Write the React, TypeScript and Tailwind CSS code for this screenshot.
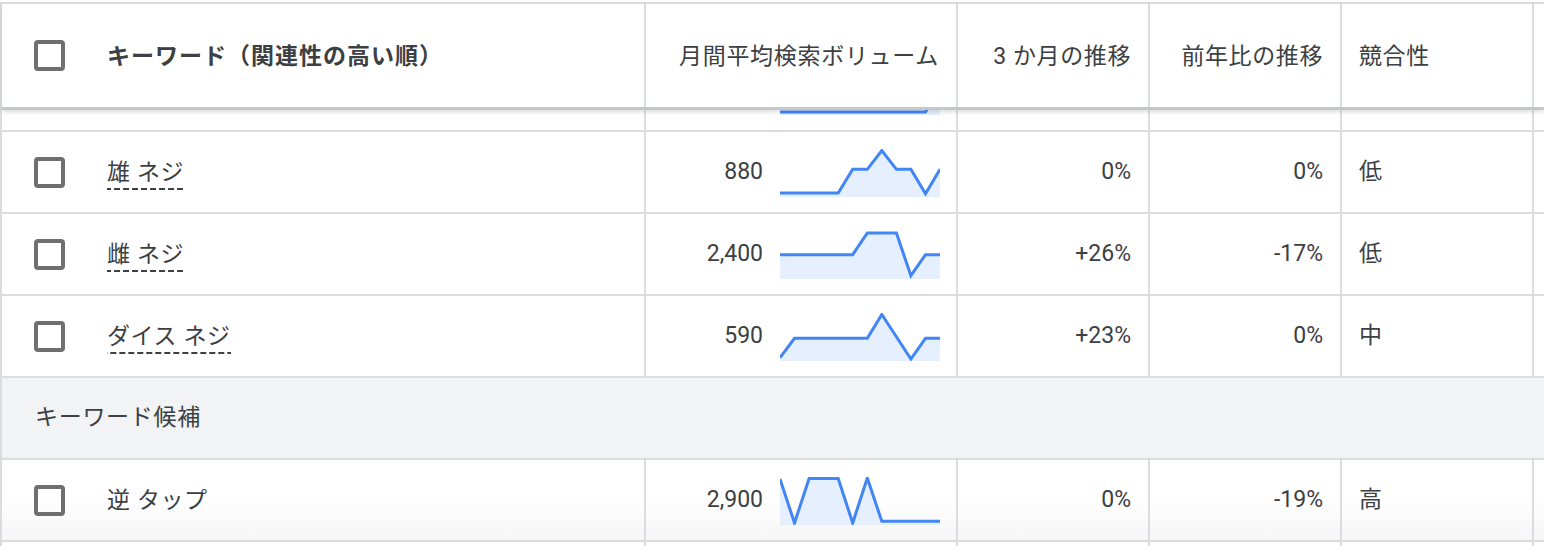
import React from "react";

type Row = {
  keyword: string;
  dashed: boolean;
  volume: string;
  trend: number[];
  threeMonth: string;
  yoy: string;
  competition: string;
};

// ヘッダーの下に隠れている行（グラフの下端だけが見える）
const partialRow: Row = {
  keyword: "",
  dashed: false,
  volume: "",
  trend: [45, 45, 45, 45, 45, 45, 45, 45, 45, 45, 45, 20],
  threeMonth: "",
  yoy: "",
  competition: "",
};

const savedRows: Row[] = [
  {
    keyword: "雄 ネジ",
    dashed: true,
    volume: "880",
    trend: [44, 44, 44, 44, 44, 20.3, 20.3, 1.5, 20.3, 20.3, 44.7, 20.3],
    threeMonth: "0%",
    yoy: "0%",
    competition: "低",
  },
  {
    keyword: "雌 ネジ",
    dashed: true,
    volume: "2,400",
    trend: [23.7, 23.7, 23.7, 23.7, 23.7, 23.7, 2, 2, 2, 44.7, 23.7, 23.7],
    threeMonth: "+26%",
    yoy: "-17%",
    competition: "低",
  },
  {
    keyword: "ダイス ネジ",
    dashed: true,
    volume: "590",
    trend: [44.7, 25.3, 25.3, 25.3, 25.3, 25.3, 25.3, 1.5, 23.7, 46, 25.3, 25.3],
    threeMonth: "+23%",
    yoy: "0%",
    competition: "中",
  },
];

const ideaRows: Row[] = [
  {
    keyword: "逆 タップ",
    dashed: false,
    volume: "2,900",
    trend: [2, 46, 1.5, 1.5, 1.5, 46, 1, 44.3, 44.3, 44.3, 44.3, 44.3],
    threeMonth: "0%",
    yoy: "-19%",
    competition: "高",
  },
];

function Sparkline({ values }: { values: number[] }) {
  const step = 160 / (values.length - 1);
  const pts = values.map((y, i) => `${(i * step).toFixed(1)},${y}`).join(" ");
  return (
    <svg width="160" height="48" viewBox="0 0 160 48" className="block shrink-0">
      <polygon points={`0,48 ${pts} 160,48`} fill="#e6effd" />
      <polyline points={pts} fill="none" stroke="#4285f4" strokeWidth="3" strokeLinejoin="miter" />
    </svg>
  );
}

function Checkbox() {
  return <span className="block w-[31px] h-[31px] shrink-0 rounded-[4px] border-[4px] border-[#6f6f6f]" />;
}

function DataRow({ row, showCheckbox = true, className = "" }: { row: Row; showCheckbox?: boolean; className?: string }) {
  return (
    <div
      className={`grid grid-cols-[644px_312px_192px_192px_192px_1fr] h-[82px] border-b-2 border-[#dadce0] ${className}`}
    >
      <div className="flex items-center pl-[32px] border-r-2 border-[#dadce0]">
        {showCheckbox && <Checkbox />}
        {row.keyword && (
          <span
            className={`ml-[42px] inline-block leading-[30px] tracking-[0.6px] ${
              row.dashed
                ? "pb-[2px] mt-[3px] bg-[linear-gradient(to_right,#3c4043_6px,transparent_6px)] bg-[length:9px_2px] bg-repeat-x bg-bottom"
                : "mt-[1px]"
            }`}
          >
            {row.keyword}
          </span>
        )}
      </div>
      <div className="flex items-center justify-end gap-[17px] pr-[16px] border-r-2 border-[#dadce0]">
        {row.volume && <span className="mt-[1px]">{row.volume}</span>}
        <div className="mt-[2px]">
          <Sparkline values={row.trend} />
        </div>
      </div>
      <div className="flex items-center justify-end pr-[17px] border-r-2 border-[#dadce0]">
        <span className="mt-[1px]">{row.threeMonth}</span>
      </div>
      <div className="flex items-center justify-end pr-[17px] border-r-2 border-[#dadce0]">
        <span className="mt-[1px]">{row.yoy}</span>
      </div>
      <div className="flex items-center pl-[17px] border-r-2 border-[#dadce0]">
        <span className="mt-[1px]">{row.competition}</span>
      </div>
      <div />
    </div>
  );
}

export default function App() {
  return (
    <div className="w-[1544px] h-[546px] overflow-hidden bg-white pt-[2px] text-[23px] text-[#3c4043] font-['Roboto','Noto_Sans_CJK_JP',sans-serif]">
      <div className="border-t-2 border-l-2 border-[#dadce0]">
        {/* ヘッダー */}
        <div className="relative z-10 bg-white grid grid-cols-[644px_312px_192px_192px_192px_1fr] h-[106px] border-b-[3px] border-[#c6c7ca] shadow-[0_2px_4px_rgba(60,64,67,0.18)]">
          <div className="flex items-center pl-[32px] border-r-2 border-[#dadce0]">
            <Checkbox />
            <span className="ml-[42px] mt-[3px] font-bold tracking-[1px]">キーワード（関連性の高い順）</span>
          </div>
          <div className="flex items-center justify-end pr-[17px] border-r-2 border-[#dadce0]">
            <span className="mt-[3px] tracking-[0.7px]">月間平均検索ボリューム</span>
          </div>
          <div className="flex items-center justify-end pr-[17px] border-r-2 border-[#dadce0]">
            <span className="mt-[3px] tracking-[0.6px]">3 か月の推移</span>
          </div>
          <div className="flex items-center justify-end pr-[17px] border-r-2 border-[#dadce0]">
            <span className="mt-[3px] tracking-[0.6px]">前年比の推移</span>
          </div>
          <div className="flex items-center pl-[17px] border-r-2 border-[#dadce0]">
            <span className="mt-[3px] tracking-[0.6px]">競合性</span>
          </div>
          <div />
        </div>

        {/* スクロールで隠れた行 */}
        <div className="h-[22px] overflow-hidden">
          <div className="-mt-[60px]">
            <DataRow row={partialRow} showCheckbox={false} />
          </div>
        </div>

        {savedRows.map((row) => (
          <DataRow key={row.keyword} row={row} />
        ))}

        <div className="h-[82px] flex items-center pl-[33px] bg-[#f1f3f4] border-b-2 border-[#dadce0]">
          <span className="mt-[1px] tracking-[0.7px]">キーワード候補</span>
        </div>

        <DataRow row={ideaRows[0]} className="bg-[linear-gradient(to_bottom,#ffffff_45%,#f6f6f6)]" />
        <div className="grid grid-cols-[644px_312px_192px_192px_192px_1fr] h-[20px]">
          <div className="border-r-2 border-[#dadce0]" />
          <div className="border-r-2 border-[#dadce0]" />
          <div className="border-r-2 border-[#dadce0]" />
          <div className="border-r-2 border-[#dadce0]" />
          <div className="border-r-2 border-[#dadce0]" />
          <div />
        </div>
      </div>
    </div>
  );
}
